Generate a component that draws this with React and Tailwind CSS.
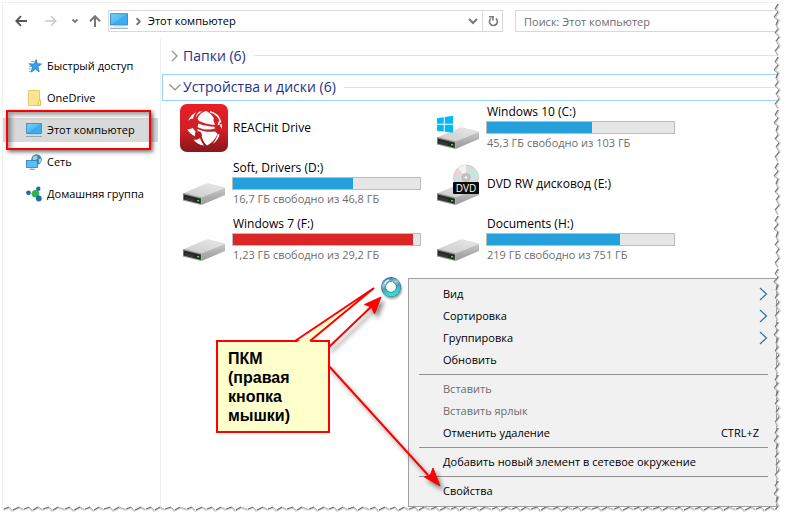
import React, { useState } from 'react';
import { ChevronRight } from 'lucide-react';

const MonitorIcon = ({ className }) => (
  <svg viewBox="0 0 16 16" className={className} aria-hidden="true">
    <defs>
      <linearGradient id="screen" x1="0" y1="0" x2="1" y2="1">
        <stop offset="0" stopColor="#7ed0fb" />
        <stop offset="0.5" stopColor="#53b8f5" />
        <stop offset="0.52" stopColor="#3ba9ee" />
        <stop offset="1" stopColor="#3fb0f2" />
      </linearGradient>
    </defs>
    <rect x="0.5" y="1.5" width="15" height="10" fill="url(#screen)" stroke="#3787b8" strokeWidth="0.8" />
    <path d="M0 14.5h16" stroke="#8fa9b8" strokeWidth="1" />
    <path d="M3 12.6h10" stroke="#b9cdd8" strokeWidth="0.6" />
  </svg>
);

const StarIcon = ({ className }) => (
  <svg viewBox="0 0 16 16" className={className} aria-hidden="true">
    <path d="M5 3.5h3M2.500 5.500h3M3 8.500h3M2.500 11h3M3 13.500h2" stroke="#68b6ee" strokeWidth="0.9" />
    <path d="M10.200 1.600l1 4.100 4.400.3-3.700 2.600 1.200 5.400-3.700-2.900-4.200 3 1.300-5L3.600 6.200l4.400-.3z" fill="#3a9fe9" stroke="#1f7cc9" strokeWidth="0.8" />
  </svg>
);

const FolderIcon = ({ className }) => (
  <svg viewBox="0 0 16 16" className={className} aria-hidden="true">
    <path d="M2.500.5h11v9.500h1v5.500h-12z" fill="#ffe394" stroke="#e9c25a" strokeWidth="0.9" />
    <path d="M12.200 15.300V11l2.300-1v5.300z" fill="#fff0bd" stroke="#dfb64c" strokeWidth="0.8" />
  </svg>
);

const NetworkIcon = ({ className }) => (
  <svg viewBox="0 0 16 16" className={className} aria-hidden="true">
    <circle cx="10.500" cy="5.500" r="5.200" fill="#3d84ae" />
    <path d="M7 3c2-2 4-1.500 4.500 0s-1 2-2 3.500S7 6 6.500 5zM12.500 5l2.600-.5c.4 2-.4 4-2 4.800z" fill="#a4cfda" />
    <rect x="0.5" y="6.500" width="11" height="7" fill="#59bdf6" stroke="#2b7db4" strokeWidth="0.8" />
    <path d="M3.500 15.400h5.500M6 13.500v1.500" stroke="#6f9ab3" strokeWidth="0.9" />
  </svg>
);

const HomegroupIcon = ({ className }) => (
  <svg viewBox="0 0 16 16" className={className} aria-hidden="true">
    <path d="M2.500 7l7 1 3-5M9.500 8l3 5" stroke="#b4d4e6" strokeWidth="1" fill="none" />
    <circle cx="9.500" cy="7.800" r="3.800" fill="#35b04a" />
    <circle cx="2.500" cy="6.800" r="2.400" fill="#1c6ea8" />
    <circle cx="12.300" cy="2.800" r="2.200" fill="#1c6ea8" />
    <circle cx="12.800" cy="12.500" r="2.900" fill="#1c6ea8" />
  </svg>
);

const DriveShape = () => (
  <>
    <defs>
      <linearGradient id="driveTop" x1="0" y1="1" x2="1" y2="0">
        <stop offset="0" stopColor="#cbcbcb" />
        <stop offset="1" stopColor="#e8e8e8" />
      </linearGradient>
      <linearGradient id="driveSide" x1="0" y1="0" x2="0" y2="1">
        <stop offset="0" stopColor="#c6c6c6" />
        <stop offset="1" stopColor="#9a9a9a" />
      </linearGradient>
    </defs>
    <path d="M3 33.500L26 23.500q1-.5 2-.3L44 27q1 .3 1 1.200L21.500 38z" fill="url(#driveTop)" />
    <path d="M21.500 37.500L45 28v7L21.500 45z" fill="url(#driveSide)" />
    <path d="M3 33l18.500 4.500V45L3 40.500z" fill="#8d8d8d" />
    <path d="M3.800 34.600l17 4.100v5L3.800 39.500z" fill="#262626" />
    <path d="M5 37.500l9 2.200M5 38.800l9 2.200" stroke="#555" strokeWidth="0.5" />
    <path d="M17 39.800l2.200.5v1.500l-2.200-.5z" fill="#3ee03e" />
  </>
);

const DriveIcon = ({ kind }) => (
  <svg viewBox="0 0 48 48" className="size-12 shrink-0" aria-hidden="true">
    <DriveShape />
    {kind === 'windows' && (
      <path d="M3 14.200l6.800-1v6.600H3zM10.800 13l8.200-1.200v8H10.800zM3 20.800h6.800v6.800L3 26.700zM10.800 20.800H19v8l-8.200-1.100z" fill="#00bcf2" />
    )}
    {kind === 'dvd' && (
      <>
        <circle cx="32" cy="17.500" r="12.500" fill="#d8dcdc" stroke="#b4b8b8" strokeWidth="0.6" />
        <path d="M32 17.500L24 8a12.500 12.500 0 0 1 8-3z" fill="#f2f4f4" />
        <path d="M32 17.500l-12.300-2.500a12.500 12.500 0 0 1 2.500-5.500z" fill="#efd3d3" />
        <path d="M32 17.500l12.300-1a12.500 12.500 0 0 0-3-7.500z" fill="#c6e6dd" />
        <circle cx="32" cy="17.500" r="4" fill="#c4cacb" stroke="#9da3a3" strokeWidth="0.6" />
        <circle cx="32" cy="17.500" r="1.800" fill="#f7f7f7" stroke="#9da3a3" strokeWidth="0.5" />
        <rect x="19" y="22" width="26" height="12" rx="1" fill="#0b0b0b" />
        <text x="32" y="31.700" textAnchor="middle" fill="#fff" fontSize="10" fontFamily="Open Sans, sans-serif">DVD</text>
      </>
    )}
  </svg>
);

const ReachitIcon = () => (
  <svg viewBox="0 0 48 48" className="size-12 shrink-0" aria-hidden="true">
    <defs>
      <linearGradient id="reachit" x1="0" y1="0" x2="0" y2="1">
        <stop offset="0" stopColor="#e81f26" />
        <stop offset="0.55" stopColor="#d11f26" />
        <stop offset="1" stopColor="#84171b" />
      </linearGradient>
    </defs>
    <rect width="48" height="48" rx="7" fill="url(#reachit)" />
    <path d="M26 7c3 1 7 5 8.500 8.500-.5 2-.5 3.500.5 5.500-6-.5-11-1.500-16-4-.5-1-1-2-1.500-2.500C19 11 22 8 26 7z" fill="#fff" />
    <path d="M18.500 19.500c5 2.200 11 3 16 3.200l.5 1.800c-5 1.600-11 1.500-16-.8-.8-.4-1.600-.8-1.600-1.700z" fill="#fff" />
    <path d="M17.500 25c6 3 12 3.200 18.500 2.500 1 1 1.500 1.500 1.200 3C35 36 31 39.500 27 41.500c-2-1.500-4-4.500-5.200-8.500.5-3-1.500-5-4.300-5.500z" fill="#fff" />
    <path d="M12.500 24c1.500.5 1.500 2.500 3.500 4-1.500 2-1 3-.5 4.500-4-1.500-7-4.500-8.300-7.500 2.200.5 3.800 0 5.300-1zM20 34c1 3 2.300 5.300 4 7.500-4-.2-8-2.500-10.500-6 2.500.7 4.500 0 6.500-1.500zM39.500 30c-.5 4-3 7.500-7 10 2.500-3 4.300-6 5-9.500z" fill="#fff" />
    <path d="M8 17c1.500-4 4.500-7 8.500-9-2 2-3 4-3.300 6.500-2 .2-4 1-5.200 2.500zM19 7.800c-1.700 1.500-2.800 3.500-3.300 6 1.500-2.500 3.500-4.800 6.500-6.600z" fill="#fff" />
    <path d="M30 7.800c5 1.200 9 5 10.500 9.700-1.200.4-2 1.500-2 3.500M40.800 20c.6 2 .5 5-.5 7" stroke="#fff" strokeWidth="1.500" fill="none" />
    <circle cx="36" cy="16" r="2.600" fill="#d41f26" />
    <circle cx="38.500" cy="25.800" r="3.400" fill="#c21e25" />
    <circle cx="14.800" cy="20" r="3.400" fill="#cc1f26" />
    <circle cx="18.300" cy="30.500" r="3.300" fill="#b81d23" />
  </svg>
);

const BusyCursor = () => (
  <svg viewBox="0 0 24 24" className="absolute left-[376px] top-[272px] size-6 drop-shadow-[1px_2px_1px_rgba(0,0,0,0.4)]" aria-hidden="true">
    <defs>
      <linearGradient id="busy" x1="0" y1="0" x2="0.3" y2="1">
        <stop offset="0" stopColor="#2b7ba0" />
        <stop offset="0.35" stopColor="#9accdd" />
        <stop offset="0.6" stopColor="#4a9fb4" />
        <stop offset="1" stopColor="#27e0d4" />
      </linearGradient>
    </defs>
    <circle cx="12" cy="12" r="7.500" fill="#fff" stroke="#2a7288" strokeWidth="5" />
    <circle cx="12" cy="12" r="7.500" fill="none" stroke="url(#busy)" strokeWidth="3.800" />
    <path d="M5.500 9A7.200 7.200 0 0 1 10 4.800" stroke="#d9f1f7" strokeWidth="1.600" fill="none" />
  </svg>
);

// Torn paper edge, repeated along the side of the window
const TornRight = () => (
  <svg className="absolute -right-1 top-0 h-full w-2 pointer-events-none" aria-hidden="true">
    <defs>
      <pattern id="tornRight" width="8" height="53" patternUnits="userSpaceOnUse">
        <path d="M5 0L2 6l3 3-4 5 4 3-2 5 2 4-3 4 4 4-3 4 3 5-4 5 2 5h5V0z" fill="#fff" />
        <path d="M6 1L3 7l3 2-4 6 4 2-2 6 2 3-3 4 4 4-3 4 3 5-4 5 2 4" stroke="#d2d2d2" strokeWidth="1.500" fill="none" />
        <path d="M5 1L2 6M5 9l-4 5M5 17l-2 5M5 26l-3 4M6 34l-3 4M6 43l-4 5" stroke="#6e6e6e" strokeWidth="1.200" fill="none" />
        <path d="M2 6l3 3M1 14l4 3M3 22l2 4M2 30l4 4M3 38l3 5M2 48l3 5" stroke="#a8a8a8" strokeWidth="0.800" fill="none" />
      </pattern>
    </defs>
    <rect width="100%" height="100%" fill="url(#tornRight)" />
  </svg>
);

const TornBottom = () => (
  <svg className="absolute left-0 -bottom-1 h-2 w-full pointer-events-none" aria-hidden="true">
    <defs>
      <pattern id="tornBottom" width="61" height="8" patternUnits="userSpaceOnUse">
        <path d="M0 5l6-2 3 3 7-3 4 2 6-2 3 3 6-3 4 2 7-2 3 3 6-3 6 2v3H0z" fill="#fff" />
        <path d="M0 6l6-2 3 3 7-3 4 2 6-2 3 3 6-3 4 2 7-2 3 3 6-3 6 2" stroke="#d2d2d2" strokeWidth="1.500" fill="none" />
        <path d="M1 5l5-2M10 6l6-3M21 5l5-2M30 6l5-3M40 5l6-2M50 6l5-3" stroke="#6e6e6e" strokeWidth="1.200" fill="none" />
        <path d="M6 3l3 3M16 3l4 2M26 3l3 3M35 3l4 2M46 3l3 3M55 3l6 2" stroke="#a8a8a8" strokeWidth="0.800" fill="none" />
      </pattern>
    </defs>
    <rect width="100%" height="100%" fill="url(#tornBottom)" />
  </svg>
);

const places = [
  { name: 'Быстрый доступ', Icon: StarIcon },
  { name: 'OneDrive', Icon: FolderIcon },
  { name: 'Этот компьютер', Icon: MonitorIcon, marked: true },
  { name: 'Сеть', Icon: NetworkIcon },
  { name: 'Домашняя группа', Icon: HomegroupIcon }
];

const drives = [
  { name: 'REACHit Drive', kind: 'reachit' },
  { name: 'Windows 10 (C:)', kind: 'windows', used: 56, free: '45,3 ГБ свободно из 103 ГБ' },
  { name: 'Soft, Drivers (D:)', used: 64, free: '16,7 ГБ свободно из 46,8 ГБ' },
  { name: 'DVD RW дисковод (E:)', kind: 'dvd' },
  { name: 'Windows 7 (F:)', used: 96, free: '1,23 ГБ свободно из 29,2 ГБ', full: true },
  { name: 'Documents (H:)', used: 71, free: '219 ГБ свободно из 751 ГБ' }
];

const menuGroups = [
  [
    { label: 'Вид', submenu: true },
    { label: 'Сортировка', submenu: true },
    { label: 'Группировка', submenu: true },
    { label: 'Обновить' }
  ],
  [
    { label: 'Вставить', disabled: true },
    { label: 'Вставить ярлык', disabled: true },
    { label: 'Отменить удаление', keys: 'CTRL+Z' }
  ],
  [{ label: 'Добавить новый элемент в сетевое окружение' }],
  [{ label: 'Свойства' }]
];

const Toolbar = () => {
  const [query, setQuery] = useState('');

  return (
    <div className="flex items-center h-[35px] pl-3 pt-px">
      <button type="button" aria-label="Назад" className="w-[30px] text-[#555]">
        <svg viewBox="0 0 12 12" className="size-3" fill="none" stroke="currentColor" strokeWidth="1.800"><path d="M12 6H1.500M6 1.200L1.200 6 6 10.800" /></svg>
      </button>
      <button type="button" aria-label="Вперёд" className="w-[26px] text-[#c8c8c8]">
        <svg viewBox="0 0 12 12" className="size-3" fill="none" stroke="currentColor" strokeWidth="1.500"><path d="M0 6h10.500M6 1.200L10.800 6 6 10.800" /></svg>
      </button>
      <button type="button" aria-label="Последние расположения" className="w-[18px] text-[#777]">
        <svg viewBox="0 0 8 8" className="size-2" fill="none" stroke="currentColor" strokeWidth="1.800"><path d="M1.500 2.500L4 5l2.500-2.500" /></svg>
      </button>
      <button type="button" aria-label="Вверх" className="w-[19px] text-[#777]">
        <svg viewBox="0 0 12 12" className="size-3" fill="none" stroke="currentColor" strokeWidth="2"><path d="M6 12V1.500M1 6.200L6 1.200l5 5" /></svg>
      </button>

      <div className="flex items-center flex-[393] h-[22px] border border-[#d9d9d9]">
        <MonitorIcon className="size-[18px] ml-px shrink-0" />
        <ChevronRight className="size-[11px] ml-[5px] shrink-0 text-[#777]" strokeWidth={4} />
        <button type="button" className="ml-1 whitespace-nowrap">Этот компьютер</button>
        <button type="button" aria-label="Журнал адресов" className="ml-auto px-1 text-[#777]">
          <svg viewBox="0 0 10 10" className="size-[10px]" fill="none" stroke="currentColor" strokeWidth="2"><path d="M1 3l4 4 4-4" /></svg>
        </button>
        <button type="button" aria-label="Обновить" className="flex items-center justify-center w-5 h-full border-l border-[#d9d9d9] text-[#777]">
          <svg viewBox="0 0 12 12" className="size-3" fill="none" stroke="currentColor" strokeWidth="1.600">
            <path d="M8.800 3.300a4 4 0 1 1-5 .2M2 1.800h4v3.600" />
          </svg>
        </button>
      </div>

      <input
        type="search"
        aria-label="Поиск"
        value={query}
        onChange={(e) => setQuery(e.target.value)}
        placeholder="Поиск: Этот компьютер"
        className="flex-[253] min-w-0 h-[22px] ml-3 pl-2 border border-r-0 border-[#d9d9d9] outline-none placeholder:text-[#6d6d6d]"
      />
    </div>
  );
};

const Sidebar = () => (
  <nav className="w-[158px] shrink-0 pt-4 border-r border-[#f0f0f0] space-y-2">
    {places.map(({ name, Icon, marked }) => (
      <a
        key={name}
        href="#"
        className={`relative flex items-center h-6 pl-[23px] mr-[2px] gap-[5px] whitespace-nowrap ${marked ? 'bg-[#d9d9d9]' : ''}`}
      >
        <Icon className="size-4 shrink-0" />
        {name}
        {marked && (
          <span className="absolute left-[3px] right-[7px] -inset-y-2 border-2 border-[#fe0000] shadow-[2px_2px_4px_rgba(0,0,0,0.55),inset_3px_3px_5px_rgba(0,0,0,0.4)]" />
        )}
      </a>
    ))}
  </nav>
);

const DriveTile = ({ drive }) => (
  <div className="flex items-center h-14 gap-1">
    {drive.kind === 'reachit' ? <ReachitIcon /> : <DriveIcon kind={drive.kind} />}
    <div className="w-[189px]">
      <div className="text-xs leading-4 pl-px whitespace-nowrap">{drive.name}</div>
      {drive.free && (
        <>
          <div className="h-[13px] mt-px border border-[#bcbcbc] bg-[#e6e6e6]">
            <div className={`h-full ${drive.full ? 'bg-[#da2626]' : 'bg-[#26a0da]'}`} style={{ width: `${drive.used}%` }} />
          </div>
          <div className="leading-4 mt-px pl-px pb-px text-[#6d6d6d] whitespace-nowrap">{drive.free}</div>
        </>
      )}
    </div>
  </div>
);

const SectionHeader = ({ title, open }) => (
  <button
    type="button"
    className={`flex items-center w-full pl-[6px] pb-px text-sm text-[#1e3287] ${
      open ? 'h-[27px] border border-r-0 border-[#99d1ff]' : 'h-9 pl-[7px]'
    }`}
  >
    <svg viewBox="0 0 12 12" className="size-3 shrink-0" fill="none" stroke="#8a8a8a" strokeWidth="1.200">
      <path d={open ? 'M.5 3.500L6 9l5.500-5.500' : 'M3 .8L8 6l-5 5.200'} />
    </svg>
    <span className="pl-[2px] whitespace-nowrap">{title}</span>
    <span className="flex-1 h-px ml-2 bg-[#e2e2e2]" />
  </button>
);

const ContextMenu = () => (
  <div role="menu" className="absolute left-[405px] right-0 top-[275px] py-1 border border-[#a0a0a0] bg-[#f1f1f1]">
    {menuGroups.map((group, i) => (
      <div key={i}>
        {i > 0 && <div className="h-px my-[3px] ml-[10px] mr-2 bg-[#919191]" />}
        {group.map((item) => (
          <button
            key={item.label}
            type="button"
            role="menuitem"
            disabled={item.disabled}
            className="flex items-center w-full h-[22px] pl-[34px] pr-2 text-left text-black disabled:text-[#6d6d6d]"
          >
            {item.label}
            {item.keys && <span className="ml-auto pr-[9px]">{item.keys}</span>}
            {item.submenu && (
              <svg viewBox="0 0 9 14" className="ml-auto h-[14px] w-[9px]" fill="none" stroke="#2f6f9f" strokeWidth="1.200"><path d="M1 1l6.500 6L1 13" /></svg>
            )}
          </button>
        ))}
      </div>
    ))}
  </div>
);

const Callout = () => (
  <>
    <svg viewBox="0 0 180 210" className="absolute left-[267px] top-[282px] w-[180px] h-[210px] pointer-events-none drop-shadow-[3px_4px_2px_rgba(0,0,0,0.45)]" aria-hidden="true">
      <g stroke="#fe0000" strokeWidth="2" fill="#fe0000">
        <path d="M58 63l46-44M58 80l100 110" />
        <path d="M111 12L94.500 19.500l7 2.500 3 7z" strokeWidth="1" />
        <path d="M170 201L154.500 192l6-2.500 2.500-6.500z" strokeWidth="1" />
      </g>
    </svg>
    <p className="absolute left-[213px] top-[337px] w-[114px] h-[93px] px-[10px] py-[7px] border-2 border-[#fe0000] bg-[#ffffcc] font-['Liberation_Sans',sans-serif] font-bold text-base leading-[19px]">
      ПКМ (правая кнопка мышки)
    </p>
    <svg viewBox="0 0 90 60" className="absolute left-[287px] top-[281px] w-[90px] h-[60px] pointer-events-none" aria-hidden="true">
      <path d="M7 58L84 4 20 58z" fill="#ffffcc" />
      <path d="M5 57L84 4 20 57" fill="none" stroke="#fe0000" strokeWidth="2" />
    </svg>
  </>
);

const App = () => (
  <div className="flex min-h-screen pl-[2px] pt-[2px] pr-3 pb-3 bg-white text-[11px] text-black font-['Open_Sans','Noto_Sans',sans-serif]">
    <div className="relative flex flex-col flex-1 min-w-0 border-l border-t border-[#f0f0f0]">
      <Toolbar />

      <div className="flex flex-1">
        <Sidebar />
        <main className="flex-1 min-w-0 pl-px">
          <SectionHeader title="Папки (6)" />
          <SectionHeader title="Устройства и диски (6)" open />

          <div className="grid grid-cols-[254px_254px] pl-[18px] -mt-px">
            {drives.map((drive) => (
              <DriveTile key={drive.name} drive={drive} />
            ))}
          </div>
        </main>
      </div>

      <ContextMenu />
      <Callout />
      <BusyCursor />
      <TornRight />
      <TornBottom />
    </div>
  </div>
);

export default App;
